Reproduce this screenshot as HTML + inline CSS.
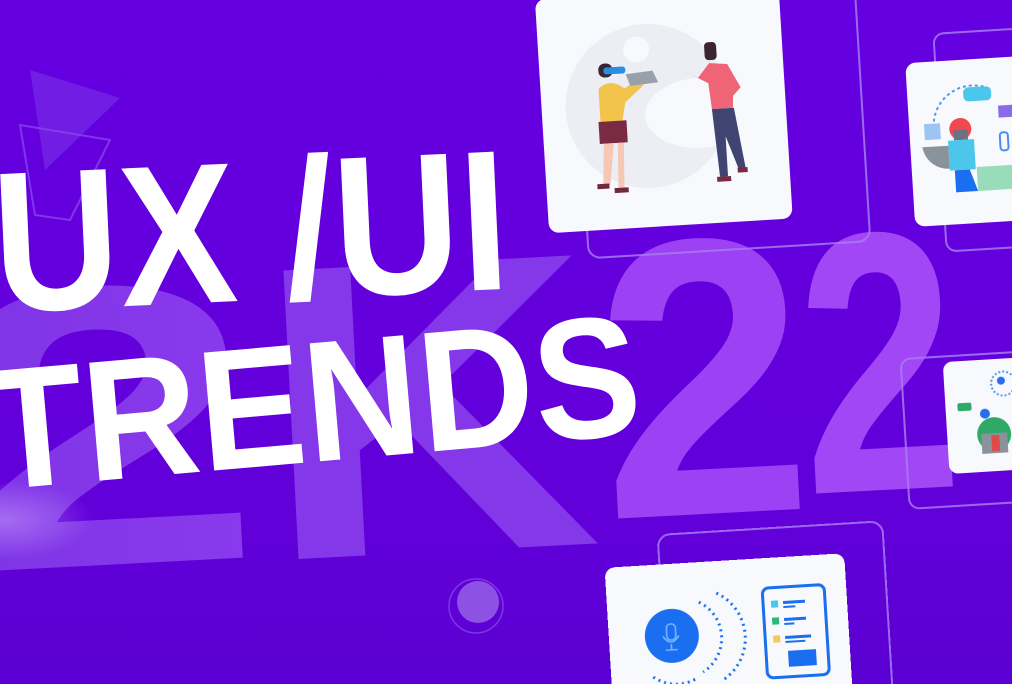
<!DOCTYPE html>
<html><head><meta charset="utf-8"><style>
html,body{margin:0;padding:0;background:#6200dc;width:1012px;height:684px;overflow:hidden;}
svg{display:block}
</style></head><body>
<svg width="1012" height="684" viewBox="0 0 1012 684" xmlns="http://www.w3.org/2000/svg">
<defs>
<linearGradient id="bg" x1="0" y1="0" x2="0" y2="1">
<stop offset="0" stop-color="#6500e0"/><stop offset="0.75" stop-color="#6200da"/><stop offset="1" stop-color="#5a00d2"/>
</linearGradient>
<linearGradient id="numL" x1="0" y1="0" x2="1" y2="0">
<stop offset="0" stop-color="#7d34e6"/><stop offset="1" stop-color="#8a3aec"/>
</linearGradient>
<radialGradient id="glow" cx="0.3" cy="0.5" r="0.5">
<stop offset="0" stop-color="#c59af8" stop-opacity="0.55"/><stop offset="1" stop-color="#c59af8" stop-opacity="0"/>
</radialGradient>
</defs>
<rect width="1012" height="684" fill="url(#bg)"/>
<polygon points="30,70 120,98 45,170" fill="#7a30e8" opacity="0.6"/>
<polygon points="20,125 110,140 70,220 35,215" fill="none" stroke="#8a4cec" stroke-width="2" opacity="0.7"/>
<g font-family="Liberation Sans, sans-serif" font-weight="bold">
<text x="-60" y="565" font-size="400" transform="rotate(-3 100 450)" fill="url(#numL)" textLength="320" lengthAdjust="spacingAndGlyphs">2</text>
<text x="262" y="552" font-size="420" transform="rotate(-3 430 450)" fill="#8438ea" textLength="335" lengthAdjust="spacingAndGlyphs">K</text>
<text x="598" y="514" font-size="395" transform="rotate(-3 700 380)" fill="#9c42f4" textLength="210" lengthAdjust="spacingAndGlyphs">2</text>
<text x="800" y="490" font-size="370" transform="rotate(-3 880 370)" fill="#a247f6" textLength="158" lengthAdjust="spacingAndGlyphs">2</text>
</g>
<ellipse cx="40" cy="520" rx="90" ry="40" fill="url(#glow)"/>
<g fill="none" stroke="#a77cf0" stroke-width="2" opacity="0.85">
<rect x="580" y="-40" width="282" height="290" rx="12" transform="rotate(-3.5 720 110)"/>
<rect x="940" y="30" width="120" height="218" rx="10" transform="rotate(-3.5 1000 140)"/>
<rect x="905" y="355" width="130" height="150" rx="10" transform="rotate(-3.5 970 430)"/>
<rect x="663" y="528" width="225" height="200" rx="12" transform="rotate(-3.5 775 620)"/>
</g>
<circle cx="476" cy="606" r="27" fill="none" stroke="#8a50e6" stroke-width="1.5" opacity="0.7"/>
<circle cx="478" cy="602" r="21" fill="#8d52e4"/>
<g transform="rotate(-3.5 664 112)">
<rect x="542" y="-8" width="244" height="234" rx="10" fill="#f8f9fd"/>
<circle cx="648" cy="105" r="82" fill="#eceef3"/>
<circle cx="640" cy="48" r="13" fill="#f8f9fd"/>
<ellipse cx="700" cy="115" rx="55" ry="35" fill="#f8f9fd"/>
<rect x="601" y="60" width="14" height="14" rx="6" fill="#3a2535"/>
<rect x="606" y="64" width="22" height="7" rx="3" fill="#2a8de0"/>
<path d="M600 85 Q612 74 626 86 L640 78 L645 84 L626 100 L622 118 L600 118 Z" fill="#f2c44c"/>
<rect x="598" y="118" width="28" height="22" fill="#7a2b43"/>
<path d="M602 140 L599 182 L606 182 L612 140 Z M616 140 L614 185 L620 185 L622 140Z" fill="#f5c7b4"/>
<rect x="593" y="180" width="12" height="5" fill="#6e2a3a"/><rect x="610" y="185" width="14" height="5" fill="#6e2a3a"/>
<path d="M628 72 L655 70 L660 82 L632 84Z" fill="#9aa0ab"/>
<rect x="708" y="45" width="12" height="18" rx="4" fill="#3a2430"/>
<path d="M686 72 L700 80 L712 66 L730 68 L742 92 L734 100 L733 112 L712 112 L710 86 Z" fill="#f06478"/>
<path d="M712 112 L734 112 L742 172 L736 176 L724 140 L724 180 L716 180 Z" fill="#3f4570"/>
<rect x="713" y="180" width="14" height="5" fill="#7a2b43"/><rect x="734" y="172" width="10" height="5" fill="#7a2b43"/>
</g>
<g transform="rotate(-3.5 960 140)">
<rect x="910" y="60" width="130" height="164" rx="10" fill="#f8f9fd"/>
<path d="M935 120 A40 40 0 0 1 995 92" fill="none" stroke="#4a9af0" stroke-width="2" stroke-dasharray="3 3"/>
<rect x="966" y="88" width="28" height="14" rx="5" fill="#4cc6ea"/>
<rect x="1000" y="108" width="14" height="12" fill="#8a6ae8"/>
<rect x="925" y="122" width="16" height="16" fill="#9cc4f4"/>
<circle cx="961" cy="129" r="11" fill="#f04a50"/>
<rect x="954" y="130" width="14" height="10" fill="#6b7280"/>
<path d="M922 145 L948 145 L948 168 A26 26 0 0 1 922 145Z" fill="#8a929c"/>
<rect x="948" y="140" width="26" height="30" fill="#4cc6ea"/>
<path d="M953 170 L968 170 L975 192 L953 192Z" fill="#1a6ef0"/>
<rect x="975" y="168" width="40" height="24" fill="#7fd4a8" opacity="0.8"/>
<rect x="1000" y="135" width="8" height="18" rx="3" fill="none" stroke="#4a8cf0" stroke-width="2"/>
</g>
<g transform="rotate(-3.5 980 415)">
<rect x="946" y="360" width="80" height="112" rx="9" fill="#f8f9fd"/>
<circle cx="1005" cy="385" r="12" fill="none" stroke="#4a9af0" stroke-width="2" stroke-dasharray="2 2"/>
<circle cx="1003" cy="382" r="4" fill="#2a6ef0"/>
<rect x="958" y="402" width="14" height="8" rx="2" fill="#2eaa66"/>
<circle cx="985" cy="414" r="5" fill="#2a6ef0"/>
<circle cx="993" cy="435" r="17" fill="#2eaa66"/>
<rect x="980" y="434" width="26" height="20" fill="#8a929c"/>
<rect x="990" y="436" width="8" height="16" fill="#e04a48"/>
</g>
<g transform="rotate(-3.5 735 620)">
<rect x="608" y="560" width="240" height="150" rx="10" fill="#f8f9fd"/>
<circle cx="671" cy="632" r="27" fill="#1a6ef0"/>
<rect x="666" y="620" width="9" height="16" rx="4" fill="none" stroke="#7ab2ff" stroke-width="1.6"/>
<path d="M662 632 Q670 644 678 632 M670 640 V646 M664 646 H676" fill="none" stroke="#7ab2ff" stroke-width="1.6"/>
<path d="M700 600 A40 40 0 0 1 700 670" fill="none" stroke="#1a6ef0" stroke-width="3" stroke-dasharray="2 4"/>
<path d="M718 592 A50 50 0 0 1 718 680" fill="none" stroke="#1a6ef0" stroke-width="3" stroke-dasharray="2 4"/>
<path d="M650 672 A40 40 0 0 0 695 675" fill="none" stroke="#1a6ef0" stroke-width="3" stroke-dasharray="2 4"/>
<rect x="764" y="590" width="62" height="90" rx="6" fill="none" stroke="#1a6ef0" stroke-width="3"/>
<rect x="772" y="603" width="7" height="7" fill="#4cc6ea"/><rect x="784" y="604" width="22" height="3" fill="#1a6ef0"/><rect x="784" y="609" width="12" height="2" fill="#1a6ef0"/>
<rect x="772" y="620" width="7" height="7" fill="#2eb87a"/><rect x="784" y="621" width="22" height="3" fill="#1a6ef0"/><rect x="784" y="626" width="10" height="2" fill="#1a6ef0"/>
<rect x="772" y="638" width="7" height="7" fill="#f6c85a"/><rect x="784" y="639" width="26" height="3" fill="#1a6ef0"/><rect x="784" y="644" width="20" height="2" fill="#1a6ef0"/>
<rect x="786" y="654" width="28" height="16" fill="#1a6ef0"/>
</g>
<text transform="translate(-4 312) rotate(-2.6)" font-family="Liberation Sans, sans-serif" font-weight="bold" font-size="200" fill="#ffffff" textLength="516" lengthAdjust="spacingAndGlyphs">UX /UI</text>
<text transform="translate(-8 490) rotate(-5)" font-family="Liberation Sans, sans-serif" font-weight="bold" font-size="172" fill="#ffffff" textLength="655" lengthAdjust="spacingAndGlyphs">TRENDS</text>
</svg>
</body></html>
